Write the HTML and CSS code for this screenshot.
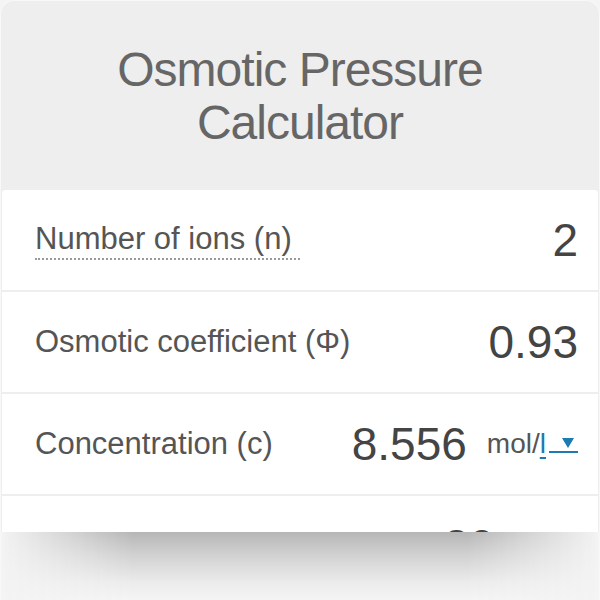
FILE: index.html
```html
<!DOCTYPE html>
<html lang="en">
<head>
<meta charset="utf-8">
<title>Osmotic Pressure Calculator</title>
<link rel="stylesheet" href="styles.css">
</head>
<body>
<div class="calculator">
  <header class="calc-header">
    <h1 class="calc-title">Osmotic Pressure Calculator</h1>
  </header>
  <div class="calc-rows">
    <div class="calc-row first">
      <span class="calc-label dotted">Number of ions (n)</span>
      <span class="calc-value">2</span>
    </div>
    <div class="calc-row">
      <span class="calc-label">Osmotic coefficient (Φ)</span>
      <span class="calc-value">0.93</span>
    </div>
    <div class="calc-row">
      <span class="calc-label">Concentration (c)</span>
      <span class="calc-value with-unit">8.556</span>
      <span class="calc-unit">mol/<span class="unit-pick">l</span><span class="unit-arrow"></span></span>
    </div>
    <div class="calc-row">
      <span class="calc-label">Temperature (T)</span>
      <span class="calc-value with-unit">20</span>
      <span class="calc-unit"><span class="unit-pick">°C</span><span class="unit-arrow"></span></span>
    </div>
  </div>
  <div class="calc-fade"></div>
</div>
</body>
</html>
```
FILE: styles.css
```css
html, body {
  margin: 0;
  padding: 0;
}

body {
  width: 600px;
  height: 600px;
  overflow: hidden;
  background: #f4f4f4;
  font-family: "Liberation Sans", Arial, sans-serif;
}

.calculator {
  position: relative;
  height: 600px;
  box-sizing: border-box;
  background: #eeeeee;
  border: 1px solid #f8f8f8;
  border-bottom: none;
  border-radius: 14px 14px 0 0;
  overflow: hidden;
}

.calc-header {
  height: 189px;
  padding: 42px 90px 0;
  box-sizing: border-box;
}

.calc-title {
  margin: 0;
  text-align: center;
  font-size: 48px;
  line-height: 53px;
  font-weight: 400;
  letter-spacing: -1px;
  color: #666666;
}

.calc-rows {
  display: flex;
  flex-direction: column;
  gap: 2px;
  padding: 0 1px;
}

.calc-row {
  display: flex;
  align-items: center;
  height: 100px;
  padding: 0 20px 0 33px;
  background: #ffffff;
}

.calc-row.first {
  border-radius: 3px 3px 0 0;
}

.calc-label {
  flex: 1;
  font-size: 31px;
  color: #555555;
}

.calc-label.dotted {
  flex: none;
  margin-right: auto;
  padding-right: 8px;
  border-bottom: 2px dotted #9a9a9a;
  line-height: 38px;
}

.calc-value {
  font-size: 46px;
  color: #444444;
}

.calc-value.with-unit {
  margin-right: 20px;
}

.calc-unit {
  display: flex;
  align-items: baseline;
  font-size: 28px;
  color: #555555;
}

.unit-pick {
  color: #1b7bb5;
  text-decoration: underline;
  text-decoration-thickness: 2px;
  text-underline-offset: 4px;
}

/* dropdown caret with its own underline */
.unit-arrow {
  display: inline-block;
  position: relative;
  width: 29px;
  height: 20px;
  margin-left: 3px;
  margin-bottom: -6px;
  border-bottom: 2px solid #1b7bb5;
}

.unit-arrow::after {
  content: "";
  position: absolute;
  left: 13px;
  top: 7px;
  border-left: 6px solid transparent;
  border-right: 6px solid transparent;
  border-top: 10px solid #1b7bb5;
}

/* soft shadow that trims the card off at the bottom */
.calc-fade {
  position: absolute;
  left: 0;
  right: 0;
  top: 531px;
  bottom: 0;
  background: #f4f4f4;
}

.calc-fade::before {
  content: "";
  position: absolute;
  inset: 0;
  background: linear-gradient(to bottom, #b6b6b6 0%, #d2d2d2 35%, #ececec 75%, #f4f4f4 100%);
  -webkit-mask-image: linear-gradient(to right, transparent 0%, #000 22%, #000 78%, transparent 100%);
  mask-image: linear-gradient(to right, transparent 0%, #000 22%, #000 78%, transparent 100%);
}
```
